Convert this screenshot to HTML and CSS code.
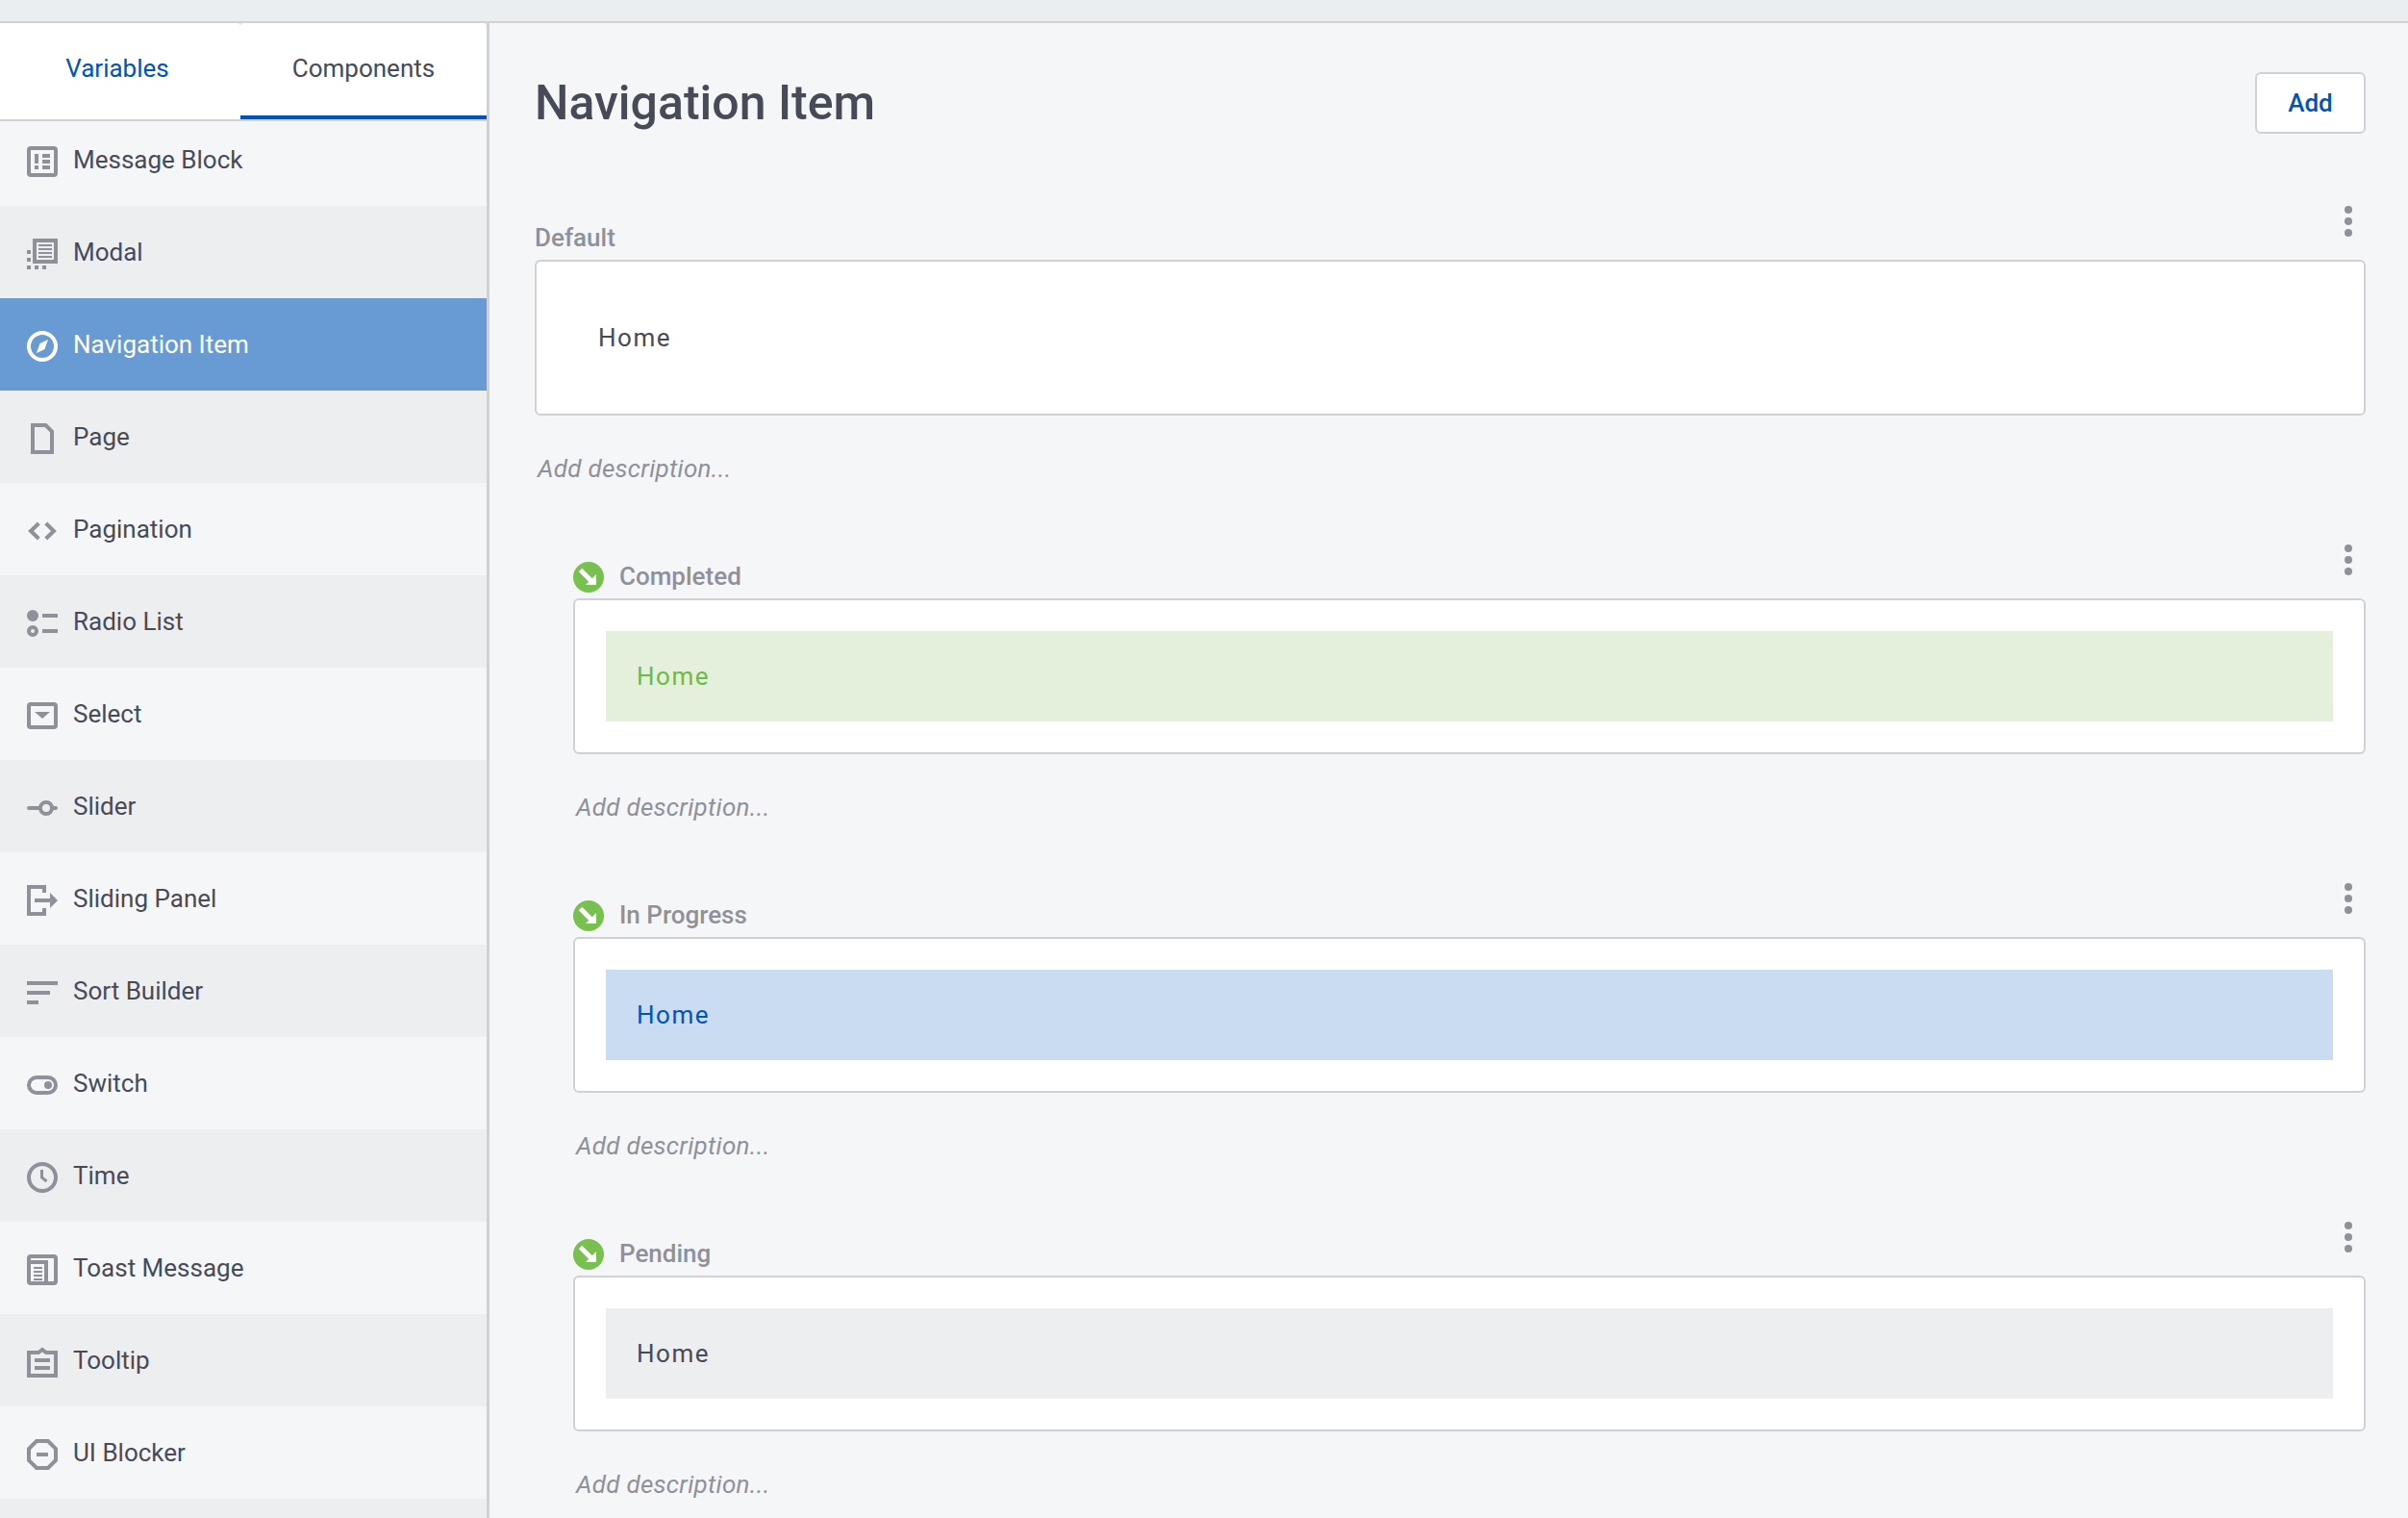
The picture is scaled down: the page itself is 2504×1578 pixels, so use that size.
FILE: index.html
```html
<!DOCTYPE html>
<html lang="en">
<head>
<meta charset="utf-8">
<title>Navigation Item</title>
<link rel="stylesheet" href="styles.css">
</head>
<body>
<div class="topbar"></div>
<div class="app">
  <aside class="sidebar">
    <div class="tabs">
      <div class="tab tab-vars">Variables</div>
      <div class="tab tab-comps">Components</div>
    </div>
    <ul class="list">
      <li class="row row-first"><svg class="ico" viewBox="0 0 32 32"><rect x="2" y="2" width="28" height="28" rx="2"/><path class="f" d="M8 8h4v10H8zM8 20h4v4H8zM16 8h8v4h-8zM16 14h8v4h-8zM16 20h8v4h-8z"/></svg><span>Message Block</span></li>
      <li class="row alt"><svg class="ico" viewBox="0 0 32 32"><path class="f" d="M6 0h26v26H6zM10 4v18h18V4zM12 6h14v2H12zM12 10h14v2H12zM12 14h14v2H12zM12 18h14v2H12zM0 12h4v4H0zM0 20h4v4H0zM0 28h4v4H0zM8 28h4v4H8zM16 28h4v4h-4z" fill-rule="evenodd"/></svg><span>Modal</span></li>
      <li class="row active"><svg class="ico" viewBox="0 0 32 32"><circle cx="16" cy="16" r="14"/><path class="f" d="M22 9 18.5 19 10 23 13.5 13z"/></svg><span>Navigation Item</span></li>
      <li class="row alt"><svg class="ico" viewBox="0 0 32 32"><path d="M6 2h13.5L26 8.5V30H6z"/></svg><span>Page</span></li>
      <li class="row"><svg class="ico" viewBox="0 0 32 32"><path d="M12.3 8 4 16l8.3 8M19.7 8 28 16l-8.3 8"/></svg><span>Pagination</span></li>
      <li class="row alt"><svg class="ico" viewBox="0 0 32 32"><circle class="f" cx="6" cy="8" r="6"/><circle cx="6" cy="24" r="4"/><path class="f" d="M16 6h16v4H16zM16 22h16v4H16z"/></svg><span>Radio List</span></li>
      <li class="row"><svg class="ico" viewBox="0 0 32 32"><rect x="2" y="4" width="28" height="24" rx="2"/><path class="f" d="M8 12h16l-8 7z"/></svg><span>Select</span></li>
      <li class="row alt"><svg class="ico" viewBox="0 0 32 32"><path class="round" d="M2 16h10M27 16h3"/><circle cx="20" cy="16" r="6"/></svg><span>Slider</span></li>
      <li class="row"><svg class="ico" viewBox="0 0 32 32"><path d="M18 8V2H2v28h16v-6"/><path class="f" d="M8 14h16V8l8 8-8 8v-6H8z"/></svg><span>Sliding Panel</span></li>
      <li class="row alt"><svg class="ico" viewBox="0 0 32 32"><path class="f" d="M0 4h32v4H0zM0 14h24v4H0zM0 24h12v4H0z"/></svg><span>Sort Builder</span></li>
      <li class="row"><svg class="ico" viewBox="0 0 32 32"><rect x="2" y="8" width="28" height="16" rx="8"/><circle class="f" cx="22" cy="16" r="4"/></svg><span>Switch</span></li>
      <li class="row alt"><svg class="ico" viewBox="0 0 32 32"><circle cx="16" cy="16" r="14"/><path class="thin" d="M15.5 8v8l5 4"/></svg><span>Time</span></li>
      <li class="row"><svg class="ico" viewBox="0 0 32 32"><rect x="2" y="2" width="28" height="28" rx="2"/><path class="f" d="M4 6h18v24h-4V10H4zM7 13h9v2H7zM7 17h9v2H7zM7 21h9v2H7zM7 25h9v2H7z"/></svg><span>Toast Message</span></li>
      <li class="row alt"><svg class="ico" viewBox="0 0 32 32"><path d="M2 6h10l4-3 4 3h10v24H2z"/><path class="f" d="M8 12h16v4H8zM8 20h16v4H8z"/></svg><span>Tooltip</span></li>
      <li class="row"><svg class="ico" viewBox="0 0 32 32"><path d="M10 2h12l8 8v12l-8 8H10l-8-8V10z"/><path class="f" d="M10 14h12v4H10z"/></svg><span>UI Blocker</span></li>
      <li class="row alt"></li>
    </ul>
  </aside>
  <main class="main">
    <header class="page-head">
      <h1 class="title">Navigation Item</h1>
      <button class="add" type="button">Add</button>
    </header>

    <section class="variant">
      <div class="head">
        <span class="label">Default</span>
        <div class="dots"><i></i><i></i><i></i></div>
      </div>
      <div class="box"><div class="nav-item">Home</div></div>
      <p class="desc">Add description...</p>
    </section>

    <section class="variant nested">
      <div class="head">
        <svg class="state" viewBox="0 0 32 32"><circle cx="16" cy="16" r="16"/><path class="arrow" d="m7.5 8.5 12.5 12.5"/><path class="head-tip" d="M24 13v11H13z"/></svg>
        <span class="label">Completed</span>
        <div class="dots"><i></i><i></i><i></i></div>
      </div>
      <div class="box"><div class="nav-item done">Home</div></div>
      <p class="desc">Add description...</p>
    </section>

    <section class="variant nested">
      <div class="head">
        <svg class="state" viewBox="0 0 32 32"><circle cx="16" cy="16" r="16"/><path class="arrow" d="m7.5 8.5 12.5 12.5"/><path class="head-tip" d="M24 13v11H13z"/></svg>
        <span class="label">In Progress</span>
        <div class="dots"><i></i><i></i><i></i></div>
      </div>
      <div class="box"><div class="nav-item progress">Home</div></div>
      <p class="desc">Add description...</p>
    </section>

    <section class="variant nested">
      <div class="head">
        <svg class="state" viewBox="0 0 32 32"><circle cx="16" cy="16" r="16"/><path class="arrow" d="m7.5 8.5 12.5 12.5"/><path class="head-tip" d="M24 13v11H13z"/></svg>
        <span class="label">Pending</span>
        <div class="dots"><i></i><i></i><i></i></div>
      </div>
      <div class="box"><div class="nav-item pending">Home</div></div>
      <p class="desc">Add description...</p>
    </section>
  </main>
</div>
</body>
</html>
```
FILE: styles.css
```css
* { box-sizing: border-box; }
html, body { margin: 0; height: 100%; overflow: hidden; }
body {
  background: #f5f6f8;
  color: #474b57;
  font-family: Roboto, "Liberation Sans", sans-serif;
  font-size: 26px;
  display: flex;
  flex-direction: column;
}
.topbar {
  height: 24px;
  flex: none;
  background: #ebeef1;
  border-bottom: 2px solid #d0d1d5;
}
.app { flex: 1; display: flex; min-height: 0; }

.sidebar {
  width: 509px;
  flex: none;
  border-right: 3px solid #d0d1d5;
  overflow: hidden;
  display: flex;
  flex-direction: column;
}
.tabs {
  height: 102px;
  flex: none;
  display: flex;
  border-bottom: 2px solid #d0d1d5;
  background: #e4e6e9;
}
.tab {
  display: flex;
  align-items: center;
  justify-content: center;
  padding-bottom: 6px;
  background: #fff;
  height: 100px;
}
.tab-vars {
  width: 250px;
  padding-right: 6px;
  color: #0054b8;
  border-top-right-radius: 4px;
}
.tab-comps {
  flex: 1;
  border-bottom: 4px solid #0054b8;
  padding-bottom: 2px;
  border-top-left-radius: 4px;
  border-top-right-radius: 4px;
}

.list { list-style: none; margin: 0; padding: 0; }
.row {
  height: 96px;
  display: flex;
  align-items: center;
  gap: 16px;
  padding-left: 28px;
  color: #474b57;
}
.row-first { margin-top: -8px; }
.row.alt { background: #edeef0; }
.row.active { background: #689bd4; color: #fff; }

.ico {
  width: 32px;
  height: 32px;
  flex: none;
  margin-top: 4px;
  color: #8f9199;
  fill: none;
  stroke: currentColor;
  stroke-width: 4;
  overflow: visible;
}
.row.active .ico { color: #fff; }
.ico .f { fill: currentColor; stroke: none; }
.ico .round { stroke-linecap: round; }
.ico .thin { stroke-width: 3; }

.main {
  flex: 1;
  min-width: 0;
  padding: 51px 44px 0 47px;
  overflow: hidden;
}
.page-head {
  height: 64px;
  margin-bottom: 79px;
  display: flex;
  align-items: center;
  justify-content: space-between;
}
.title {
  margin: 0;
  font-size: 50px;
  font-weight: 500;
  color: #474b57;
  line-height: 64px;
}
.add {
  width: 115px;
  height: 64px;
  background: #fff;
  border: 2px solid #d0d1d5;
  border-radius: 6px;
  color: #0054b8;
  font: 500 26px Roboto, "Liberation Sans", sans-serif;
  padding: 0;
}

.nested { margin-left: 40px; }
.head {
  height: 52px;
  padding-bottom: 6px;
  display: flex;
  align-items: flex-end;
  color: #8f9199;
}
.label {
  font-weight: 500;
  line-height: 32px;
  flex: 1;
  margin-bottom: 1px;
}
.state {
  width: 32px;
  height: 32px;
  flex: none;
  margin-right: 16px;
}
.state circle { fill: #78c04f; }
.state .arrow { stroke: #fff; stroke-width: 5; fill: none; }
.state .head-tip { fill: #fff; }
.dots {
  align-self: flex-start;
  margin-top: -4px;
  margin-right: 14px;
  display: flex;
  flex-direction: column;
  gap: 4px;
}
.dots i {
  display: block;
  width: 8px;
  height: 8px;
  border-radius: 50%;
  background: #8f9199;
}

.box {
  height: 162px;
  padding: 32px;
  background: #fff;
  border: 2px solid #d0d1d5;
  border-radius: 6px;
}
.nav-item {
  height: 94px;
  padding: 0 32px;
  display: flex;
  align-items: center;
  letter-spacing: 1.5px;
  color: #474b57;
}
.nav-item.done { background: #e5f0dc; color: #6cbb44; }
.nav-item.progress { background: #cadcf2; color: #0054b8; }
.nav-item.pending { background: #edeef0; }

.desc {
  margin: 0;
  height: 138px;
  padding: 39px 0 0 3px;
  line-height: 32px;
  font-style: italic;
  letter-spacing: 0.28px;
  color: #8f9199;
}
```
